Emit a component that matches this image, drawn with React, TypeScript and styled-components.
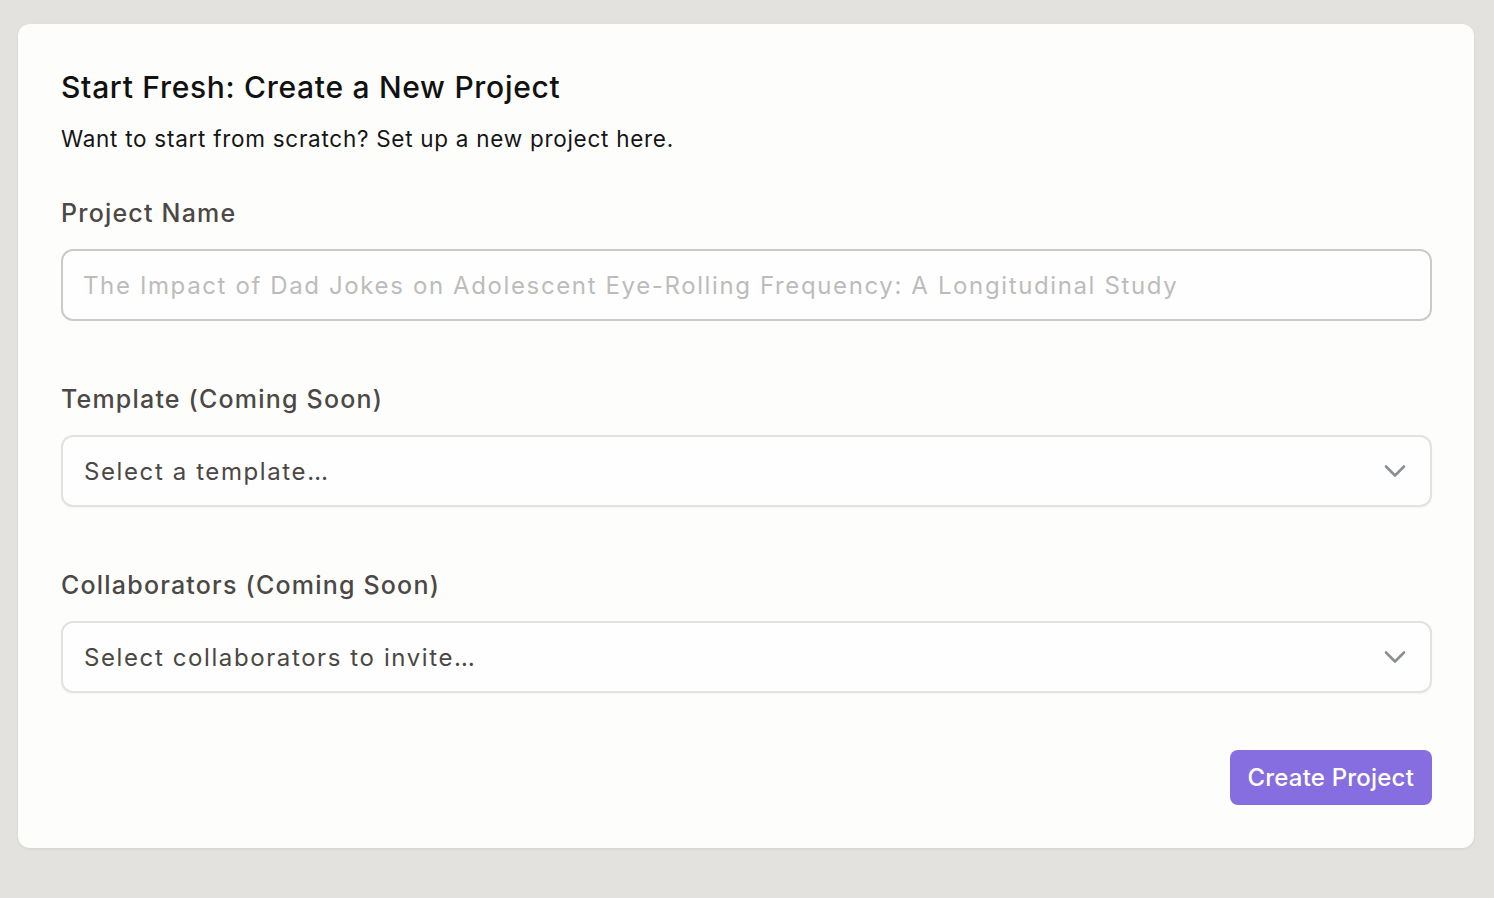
import styled, { createGlobalStyle } from "styled-components";

const GlobalStyle = createGlobalStyle`
  html, body {
    margin: 0;
    padding: 0;
    background: #e4e2df;
    font-family: Inter, "Liberation Sans", sans-serif;
    -webkit-font-smoothing: antialiased;
  }
  * { box-sizing: border-box; }
`;

const Page = styled.div`
  min-height: 898px;
  padding: 24px 20px 50px 18px;
`;

const Card = styled.section`
  background: #fdfdfc;
  border-radius: 12px;
  box-shadow: 0 1px 3px rgba(0, 0, 0, 0.08);
  padding: 45px 42px 43px 43px;
  display: flex;
  flex-direction: column;
`;

const Title = styled.h2`
  margin: 0;
  font-size: 30px;
  line-height: 36px;
  font-weight: 500;
  color: #111;
  letter-spacing: 0.7px;
`;

const Subtitle = styled.p`
  margin: 19px 0 0;
  font-size: 22.5px;
  line-height: 30px;
  color: #151515;
  letter-spacing: 0.72px;
`;

const Field = styled.div<{ $first?: boolean }>`
  display: flex;
  flex-direction: column;
  gap: 18px;
  margin-top: ${({ $first }) => ($first ? "41px" : "60px")};
`;

const Label = styled.label`
  font-size: 25px;
  line-height: 36px;
  font-weight: 500;
  color: #4b4845;
  letter-spacing: 1.2px;
`;

const Input = styled.input`
  height: 72px;
  width: 100%;
  border: 2px solid #cbcac8;
  border-radius: 12px;
  background: #fefefe;
  padding: 0 20px;
  font-family: inherit;
  font-size: 24px;
  letter-spacing: 1.62px;
  color: #222;
  outline: none;
  &::placeholder {
    color: #bdbcba;
  }
`;

const Select = styled.div`
  height: 72px;
  display: flex;
  align-items: center;
  justify-content: space-between;
  border: 2px solid #e3e2e0;
  border-radius: 12px;
  background: #fefefe;
  box-shadow: 0 1px 2px rgba(0, 0, 0, 0.04);
  padding: 0 24px 0 21px;
  font-size: 24px;
  letter-spacing: 1.6px;
  color: #4a4744;
  cursor: pointer;
`;

const Chevron = styled.svg`
  width: 22px;
  height: 14px;
  flex-shrink: 0;
`;

const Footer = styled.div`
  display: flex;
  justify-content: flex-end;
  margin-top: 57px;
`;

const Button = styled.button`
  height: 55px;
  padding: 0 18px;
  border: none;
  border-radius: 8px;
  background: #866ee0;
  color: #fff;
  font-family: inherit;
  font-size: 24px;
  font-weight: 500;
  letter-spacing: 0.2px;
  cursor: pointer;
`;

const ChevronIcon = () => (
  <Chevron viewBox="0 0 22 14" fill="none">
    <path
      d="M2 2.5 L11 11.5 L20 2.5"
      stroke="#8a8e96"
      strokeWidth="2.6"
      strokeLinecap="round"
      strokeLinejoin="round"
    />
  </Chevron>
);

export default function App() {
  return (
    <>
      <GlobalStyle />
      <Page>
        <Card>
          <Title>Start Fresh: Create a New Project</Title>
          <Subtitle>Want to start from scratch? Set up a new project here.</Subtitle>
          <Field $first>
            <Label>Project Name</Label>
            <Input placeholder="The Impact of Dad Jokes on Adolescent Eye-Rolling Frequency: A Longitudinal Study" />
          </Field>
          <Field>
            <Label>Template (Coming Soon)</Label>
            <Select>
              <span>Select a template…</span>
              <ChevronIcon />
            </Select>
          </Field>
          <Field>
            <Label>Collaborators (Coming Soon)</Label>
            <Select>
              <span>Select collaborators to invite…</span>
              <ChevronIcon />
            </Select>
          </Field>
          <Footer>
            <Button>Create Project</Button>
          </Footer>
        </Card>
      </Page>
    </>
  );
}
